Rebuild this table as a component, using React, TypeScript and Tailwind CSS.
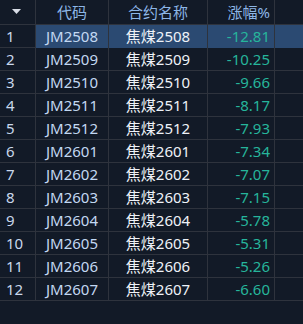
const rows = [
  ['JM2508', '焦煤2508', '-12.81'],
  ['JM2509', '焦煤2509', '-10.25'],
  ['JM2510', '焦煤2510', '-9.66'],
  ['JM2511', '焦煤2511', '-8.17'],
  ['JM2512', '焦煤2512', '-7.93'],
  ['JM2601', '焦煤2601', '-7.34'],
  ['JM2602', '焦煤2602', '-7.07'],
  ['JM2603', '焦煤2603', '-7.15'],
  ['JM2604', '焦煤2604', '-5.78'],
  ['JM2605', '焦煤2605', '-5.31'],
  ['JM2606', '焦煤2606', '-5.26'],
  ['JM2607', '焦煤2607', '-6.60'],
]

const cols = 'grid grid-cols-[35px_1px_72px_1px_98px_1px_66px_1px_28px]'

const App = () => {
  return (
    <div
      className="w-[303px] h-[324px] bg-[#121a27] text-[15px] overflow-hidden"
      style={{ fontFamily: '"Noto Sans", "Noto Sans CJK SC", sans-serif' }}
    >
      {/* header */}
      <div className={`${cols} h-[24px] items-center text-[#8db6e6]`}>
        <div className="flex justify-center pr-[3px]">
          <svg width="9" height="6" viewBox="0 0 9 6">
            <polygon points="0,0 9,0 4.5,5" fill="#d8dde6" />
          </svg>
        </div>
        <div className="h-full bg-[#2e333d]" />
        <div className="text-center">代码</div>
        <div className="h-full bg-[#2e333d]" />
        <div className="text-center">合约名称</div>
        <div className="h-full bg-[#2e333d]" />
        <div className="text-right pr-[4px]">涨幅%</div>
        <div className="h-full bg-[#2e333d]" />
        <div />
      </div>
      <div className="h-[1px] bg-[#2e333d]" />

      {rows.map((r, i) => {
        const sel = i === 0
        return (
          <div key={r[0]}>
            <div className={`${cols} h-[22px] items-center`}>
              <div className="pl-[6px] text-[#c9d8ec]">{i + 1}</div>
              <div className="h-full bg-[#2e333d]" />
              <div className={`h-full flex items-center justify-center text-[#c3d8f2] ${sel ? 'bg-[#2b4a72]' : ''}`}>{r[0]}</div>
              <div className="h-full bg-[#2e333d]" />
              <div className={`h-full flex items-center justify-center text-[#eef2f8] ${sel ? 'bg-[#2b4a72]' : ''}`}>{r[1]}</div>
              <div className="h-full bg-[#2e333d]" />
              <div className={`h-full flex items-center justify-end pr-[4px] text-[#26b59b] ${sel ? 'bg-[#2b4a72]' : ''}`}>{r[2]}</div>
              <div className="h-full bg-[#2e333d]" />
              <div className={`h-full ${sel ? 'bg-[#2b4a72]' : ''}`} />
            </div>
            <div className="h-[1px] bg-[#2e333d]" />
          </div>
        )
      })}
    </div>
  )
}

export default App
